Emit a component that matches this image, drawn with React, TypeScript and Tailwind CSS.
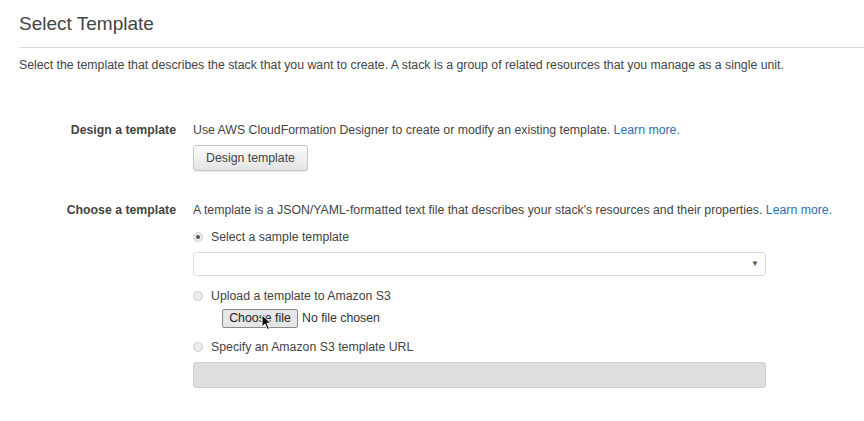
import React from "react";

function Radio({ checked }: { checked?: boolean }) {
  return (
    <span className="w-[10px] h-[10px] rounded-full border border-[#cfcfcf] bg-[#ebebeb] flex items-center justify-center shrink-0">
      {checked && <span className="w-[4px] h-[4px] rounded-full bg-[#555]" />}
    </span>
  );
}

export default function App() {
  return (
    <div className="w-[864px] h-[421px] bg-white text-[#444] overflow-hidden" style={{ fontFamily: '"Liberation Sans", Arial, sans-serif' }}>
      <div className="pl-[19px]">
        <h1 className="mt-[12px] text-[19px] leading-[24px] text-[#444]">Select Template</h1>
        <div className="mt-[11px] h-px bg-[#dcdcdc]" />
        <p className="mt-[9px] text-[12.3px] leading-[16px]">
          Select the template that describes the stack that you want to create. A stack is a group of related resources that you manage as a single unit.
        </p>
      </div>

      <div className="mt-[49px] flex">
        <div className="w-[176px] text-right font-bold text-[12.3px] leading-[16px]">Design a template</div>
        <div className="ml-[17px] flex flex-col items-start">
          <div className="text-[12.3px] leading-[16px]">
            Use AWS CloudFormation Designer to create or modify an existing template.{" "}
            <span className="text-[#2c6fb0]">Learn more.</span>
          </div>
          <button className="mt-[7px] h-[26px] w-[115px] rounded-[3px] border border-[#c4c4c4] bg-gradient-to-b from-[#fbfbfb] to-[#e4e4e4] text-[12.3px] text-[#444] shadow-[0_1px_1px_rgba(0,0,0,0.08)]">
            Design template
          </button>
        </div>
      </div>

      <div className="mt-[31px] flex">
        <div className="w-[176px] text-right font-bold text-[12.3px] leading-[16px]">Choose a template</div>
        <div className="ml-[17px] flex flex-col items-start">
          <div className="text-[12.3px] leading-[16px]">
            A template is a JSON/YAML-formatted text file that describes your stack's resources and their properties.{" "}
            <span className="text-[#2c6fb0]">Learn more.</span>
          </div>
          <div className="mt-[11px] flex items-center h-[16px] text-[12.3px]">
            <Radio checked />
            <span className="ml-[8px]">Select a sample template</span>
          </div>
          <div className="mt-[7px] w-[573px] h-[24px] rounded-[3px] border border-[#dadada] bg-white flex items-center justify-end pr-[6px]">
            <span className="text-[8px] text-[#555]">▼</span>
          </div>
          <div className="mt-[12px] flex items-center h-[16px] text-[12.3px]">
            <Radio />
            <span className="ml-[8px]">Upload a template to Amazon S3</span>
          </div>
          <div className="mt-[5px] ml-[29px] flex items-center h-[19px] text-[12.3px] relative">
            <span className="h-[19px] w-[76px] border border-[#8a8a8a] rounded-[2px] bg-[#e6e6e6] text-[#222] flex items-center justify-center">
              Choose file
            </span>
            <span className="ml-[4px] text-[#333]">No file chosen</span>
            <svg className="absolute left-[39px] top-[5px]" width="11" height="17" viewBox="0 0 11 17">
              <path d="M1 1 L1 13 L4 10 L6.5 15.5 L8.5 14.6 L6 9.2 L10 9.2 Z" fill="#111" stroke="#fff" strokeWidth="1" strokeLinejoin="round" />
            </svg>
          </div>
          <div className="mt-[11px] flex items-center h-[16px] text-[12.3px]">
            <Radio />
            <span className="ml-[8px]">Specify an Amazon S3 template URL</span>
          </div>
          <div className="mt-[7px] w-[573px] h-[26px] rounded-[3px] border border-[#cfcfcf] bg-[#dedede]" />
        </div>
      </div>
    </div>
  );
}
